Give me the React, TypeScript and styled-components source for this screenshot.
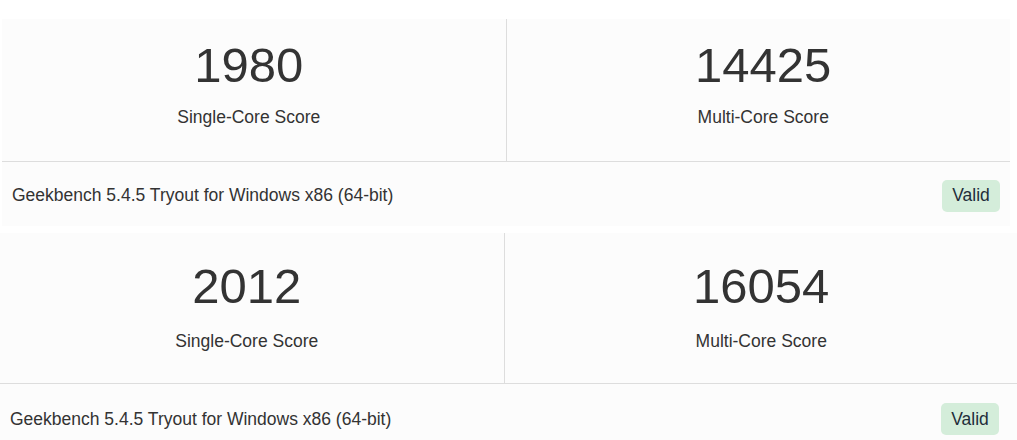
import { type FC } from "react";
import styled, { createGlobalStyle } from "styled-components";

type Result = {
  single: number;
  multi: number;
  version: string;
  valid: boolean;
};

const results: Result[] = [
  { single: 1980, multi: 14425, version: "Geekbench 5.4.5 Tryout for Windows x86 (64-bit)", valid: true },
  { single: 2012, multi: 16054, version: "Geekbench 5.4.5 Tryout for Windows x86 (64-bit)", valid: true },
];

// the two cards in the capture sit slightly differently
const layouts = [
  { offset: 2, width: 1008, gridRight: 0, top: 17, gap: 11, bottom: 32, footTop: 3, footRight: 10, footLeft: 10 },
  { offset: 0, width: 1017, gridRight: 9, top: 24, gap: 14, bottom: 30, footTop: 6, footRight: 18, footLeft: 10 },
];

const App: FC = () => {
  return (
    <>
      <GlobalStyle />
      <Page>
        {results.map((r, i) => {
          const l = layouts[i];
          return (
            <Card key={i} $offset={l.offset} $width={l.width}>
              <Scores $right={l.gridRight}>
                <ScoreCell $top={l.top} $bottom={l.bottom}>
                  <ScoreValue $gap={l.gap}>{r.single}</ScoreValue>
                  <ScoreLabel>Single-Core Score</ScoreLabel>
                </ScoreCell>
                <Divider />
                <ScoreCell $top={l.top} $bottom={l.bottom}>
                  <ScoreValue $gap={l.gap}>{r.multi}</ScoreValue>
                  <ScoreLabel>Multi-Core Score</ScoreLabel>
                </ScoreCell>
              </Scores>
              <Footer $top={l.footTop} $left={l.footLeft} $right={l.footRight}>
                <Version>{r.version}</Version>
                {r.valid && <Badge>Valid</Badge>}
              </Footer>
            </Card>
          );
        })}
      </Page>
    </>
  );
};

export default App;

const GlobalStyle = createGlobalStyle`
  html, body {
    margin: 0;
    padding: 0;
    background: #fff;
  }
  body {
    font-family: "Liberation Sans", Arial, sans-serif;
    color: #333;
  }
`;

const Page = styled.div`
  display: flex;
  flex-direction: column;
  gap: 7px;
  padding-top: 19px;
  width: 1017px;
`;

const Card = styled.div<{ $offset: number; $width: number }>`
  margin-left: ${p => p.$offset}px;
  width: ${p => p.$width}px;
  background: #fcfcfc;
`;

const Scores = styled.div<{ $right: number }>`
  display: grid;
  grid-template-columns: 1fr 1px 1fr;
  column-gap: 10px;
  margin-right: ${p => p.$right}px;
`;

const ScoreCell = styled.div<{ $top: number; $bottom: number }>`
  display: flex;
  flex-direction: column;
  align-items: center;
  padding: ${p => p.$top}px 0 ${p => p.$bottom}px;
`;

const Divider = styled.div`
  background: #ddd;
`;

const ScoreValue = styled.div<{ $gap: number }>`
  font-size: 49px;
  line-height: 58px;
  color: #333;
  margin-bottom: ${p => p.$gap}px;
`;

const ScoreLabel = styled.div`
  font-size: 17.5px;
  line-height: 24px;
  color: #333;
`;

const Footer = styled.div<{ $top: number; $left: number; $right: number }>`
  display: flex;
  align-items: center;
  justify-content: space-between;
  height: 65px;
  padding: ${p => p.$top}px ${p => p.$right}px 0 ${p => p.$left}px;
  box-sizing: border-box;
  border-top: 1px solid #ddd;
`;

const Version = styled.span`
  font-size: 17.5px;
  color: #333;
`;

const Badge = styled.span`
  display: inline-flex;
  align-items: center;
  justify-content: center;
  width: 58px;
  height: 32px;
  border-radius: 5px;
  background: #d4edda;
  color: #1f2d3a;
  font-size: 17.5px;
`;
